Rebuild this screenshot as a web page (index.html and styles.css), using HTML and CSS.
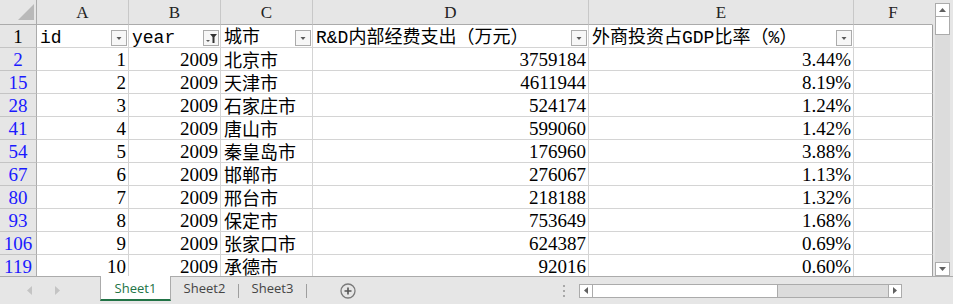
FILE: index.html
```html
<!DOCTYPE html>
<html lang="zh">
<head>
<meta charset="utf-8">
<title>Sheet1</title>
<link rel="stylesheet" href="styles.css">
</head>
<body>
<div class="app">
  <div class="main">
    <div class="grid">
      <div class="corner"><svg width="16" height="16" viewBox="0 0 16 16"><path d="M0 16H16V0z" fill="#b9b9b9"/></svg></div>
      <div class="ch">A</div>
      <div class="ch">B</div>
      <div class="ch">C</div>
      <div class="ch">D</div>
      <div class="ch">E</div>
      <div class="ch last">F</div>

      <div class="rh first">1</div>
      <div class="fc"><span class="ft">id</span><svg class="fb" width="16" height="16" viewBox="0 0 16 16"><rect x="0.5" y="0.5" width="15" height="15" fill="#f7f7f7" stroke="#ababab"/><path d="M5.5 7h5l-2.5 3z" fill="#595959"/></svg></div>
      <div class="fc"><span class="ft">year</span><svg class="fb" width="16" height="16" viewBox="0 0 16 16"><rect x="0.5" y="0.5" width="15" height="15" fill="#f7f7f7" stroke="#ababab"/><path d="M3 10h4l-2 2z" fill="#595959"/><path d="M7 4h7l-2.5 3v6h-2V7z" fill="#333"/></svg></div>
      <div class="fc"><span class="ft">城市</span><svg class="fb" width="16" height="16" viewBox="0 0 16 16"><rect x="0.5" y="0.5" width="15" height="15" fill="#f7f7f7" stroke="#ababab"/><path d="M5.5 7h5l-2.5 3z" fill="#595959"/></svg></div>
      <div class="fc"><span class="ft">R&amp;D内部经费支出（万元）</span><svg class="fb" width="16" height="16" viewBox="0 0 16 16"><rect x="0.5" y="0.5" width="15" height="15" fill="#f7f7f7" stroke="#ababab"/><path d="M5.5 7h5l-2.5 3z" fill="#595959"/></svg></div>
      <div class="fc"><span class="ft">外商投资占GDP比率（%）</span><svg class="fb" width="16" height="16" viewBox="0 0 16 16"><rect x="0.5" y="0.5" width="15" height="15" fill="#f7f7f7" stroke="#ababab"/><path d="M5.5 7h5l-2.5 3z" fill="#595959"/></svg></div>
      <div class="c e"></div>

      <div class="rh">2</div><div class="c n">1</div><div class="c n">2009</div><div class="c t">北京市</div><div class="c n">3759184</div><div class="c n">3.44%</div><div class="c e"></div>
      <div class="rh">15</div><div class="c n">2</div><div class="c n">2009</div><div class="c t">天津市</div><div class="c n">4611944</div><div class="c n">8.19%</div><div class="c e"></div>
      <div class="rh">28</div><div class="c n">3</div><div class="c n">2009</div><div class="c t">石家庄市</div><div class="c n">524174</div><div class="c n">1.24%</div><div class="c e"></div>
      <div class="rh">41</div><div class="c n">4</div><div class="c n">2009</div><div class="c t">唐山市</div><div class="c n">599060</div><div class="c n">1.42%</div><div class="c e"></div>
      <div class="rh">54</div><div class="c n">5</div><div class="c n">2009</div><div class="c t">秦皇岛市</div><div class="c n">176960</div><div class="c n">3.88%</div><div class="c e"></div>
      <div class="rh">67</div><div class="c n">6</div><div class="c n">2009</div><div class="c t">邯郸市</div><div class="c n">276067</div><div class="c n">1.13%</div><div class="c e"></div>
      <div class="rh">80</div><div class="c n">7</div><div class="c n">2009</div><div class="c t">邢台市</div><div class="c n">218188</div><div class="c n">1.32%</div><div class="c e"></div>
      <div class="rh">93</div><div class="c n">8</div><div class="c n">2009</div><div class="c t">保定市</div><div class="c n">753649</div><div class="c n">1.68%</div><div class="c e"></div>
      <div class="rh">106</div><div class="c n">9</div><div class="c n">2009</div><div class="c t">张家口市</div><div class="c n">624387</div><div class="c n">0.69%</div><div class="c e"></div>
      <div class="rh">119</div><div class="c n">10</div><div class="c n">2009</div><div class="c t">承德市</div><div class="c n">92016</div><div class="c n">0.60%</div><div class="c e"></div>
    </div>
    <div class="vscroll">
      <div class="sbtn"><svg width="7" height="4" viewBox="0 0 7 4"><path d="M0 4h7L3.5 0z" fill="#606060"/></svg></div>
      <div class="vthumb"></div>
      <div class="vtrack"></div>
      <div class="sbtn"><svg width="7" height="4" viewBox="0 0 7 4"><path d="M0 0h7L3.5 4z" fill="#606060"/></svg></div>
    </div>
  </div>
  <div class="tabbar">
    <div class="nav">
      <svg width="6" height="9" viewBox="0 0 6 9"><path d="M6 0v9L1 4.5z" fill="#c4c4c4"/></svg>
      <svg width="6" height="9" viewBox="0 0 6 9"><path d="M0 0v9l5-4.5z" fill="#c4c4c4"/></svg>
    </div>
    <div class="tab active">Sheet1</div>
    <div class="tab">Sheet2</div>
    <div class="sep"></div>
    <div class="tab">Sheet3</div>
    <div class="sep"></div>
    <svg class="plus" width="16" height="16" viewBox="0 0 16 16"><circle cx="8" cy="8" r="7" fill="none" stroke="#7a7a7a" stroke-width="1.3"/><path d="M4.5 8h7M8 4.5v7" stroke="#555" stroke-width="1.6"/></svg>
    <svg class="dots" width="3" height="14" viewBox="0 0 3 14"><rect x="1" y="1" width="2" height="2" fill="#a8a8a8"/><rect x="1" y="6" width="2" height="2" fill="#a8a8a8"/><rect x="1" y="11" width="2" height="2" fill="#a8a8a8"/></svg>
    <div class="hscroll">
      <div class="hbtn"><svg width="4" height="7" viewBox="0 0 4 7"><path d="M4 0v7L0 3.5z" fill="#606060"/></svg></div>
      <div class="hthumb"></div>
      <div class="htrack"></div>
      <div class="hbtn"><svg width="4" height="7" viewBox="0 0 4 7"><path d="M0 0v7l4-3.5z" fill="#606060"/></svg></div>
    </div>
  </div>
</div>
</body>
</html>
```

FILE: styles.css
```css
html, body {
  margin: 0;
  padding: 0;
}
body {
  width: 953px;
  height: 304px;
  overflow: hidden;
  background: #e6e6e6;
}
.app {
  width: 953px;
  height: 304px;
  display: flex;
  flex-direction: column;
}
.main {
  display: flex;
  height: 276px;
}
.grid {
  display: grid;
  grid-template-columns: 37px 92px 92px 92px 276px 265px 79px;
  grid-template-rows: 25px repeat(11, 23px);
  align-content: start;
  width: 933px;
  height: 276px;
  overflow: hidden;
  background: #fff;
}
.grid > div {
  box-sizing: border-box;
  overflow: hidden;
  white-space: nowrap;
}
.corner {
  background: #e6e6e6;
  border-right: 1px solid #ababab;
  border-bottom: 1px solid #ababab;
  display: flex;
  justify-content: flex-end;
  align-items: flex-end;
  padding: 0 2px 4px 0;
}
.ch {
  background: #e6e6e6;
  border-right: 1px solid #c8c8c8;
  border-bottom: 1px solid #ababab;
  text-align: center;
  font: 17px/21px "Liberation Serif", serif;
  padding-top: 2px;
  color: #222;
}
.ch.last {
  border-right-color: #e6e6e6;
}
.rh {
  background: #e6e6e6;
  border-right: 1px solid #ababab;
  border-bottom: 1px solid #c4c4c4;
  text-align: center;
  font: 19px/21px "Liberation Serif", serif;
  color: #1a1aff;
  padding-top: 1px;
}
.rh.first {
  color: #000;
}
.fc {
  display: flex;
  justify-content: space-between;
  align-items: flex-end;
  padding: 0 1px 0 3px;
  border-right: 1px solid #d4d4d4;
  border-bottom: 1px solid #d4d4d4;
  font: 18px "Liberation Mono", "Noto Sans CJK SC", monospace;
  color: #000;
}
.ft {
  line-height: 18px;
}
.fb {
  flex: none;
  margin-bottom: 1px;
}
.c {
  border-right: 1px solid #d4d4d4;
  border-bottom: 1px solid #d4d4d4;
  color: #000;
}
.n {
  text-align: right;
  padding: 1px 2px 0 0;
  font: 19px/21px "Liberation Serif", serif;
}
.grid > .t {
  padding: 1px 0 0 3px;
  font: 18px/21px "Noto Sans CJK SC", sans-serif;
  overflow: visible;
}
.e {
  border-right-color: #9e9e9e;
}
.vscroll {
  width: 20px;
  box-sizing: border-box;
  padding: 3px 3px 0 2px;
  display: flex;
  flex-direction: column;
  background: #e6e6e6;
}
.sbtn {
  height: 14px;
  box-sizing: border-box;
  border: 1px solid #ababab;
  background: #fff;
  display: flex;
  align-items: center;
  justify-content: center;
  flex: none;
}
.vthumb {
  height: 18px;
  box-sizing: border-box;
  border: 1px solid #ababab;
  border-top: none;
  background: #fff;
  flex: none;
}
.vtrack {
  flex: 1;
  background: #dcdcdc;
}
.tabbar {
  height: 28px;
  box-sizing: border-box;
  border-top: 1px solid #ababab;
  display: flex;
  align-items: center;
  background: #e6e6e6;
  font: 13px "Open Sans", "Noto Sans", sans-serif;
}
.nav {
  width: 100px;
  box-sizing: border-box;
  padding-left: 26px;
  display: flex;
  gap: 23px;
  align-items: center;
}
.tab {
  align-self: flex-start;
  margin-top: -1px;
  height: 25px;
  width: 67px;
  box-sizing: border-box;
  border-bottom: 2px solid transparent;
  display: flex;
  align-items: center;
  justify-content: center;
  color: #444;
}
.tab.active {
  width: 71px;
  background: #fff;
  border-left: 1px solid #ababab;
  border-right: 1px solid #ababab;
  border-bottom: 2px solid #217346;
  color: #217346;
}
.sep {
  width: 1px;
  height: 14px;
  background: #9e9e9e;
}
.plus {
  margin-left: 33px;
  flex: none;
}
.dots {
  margin-left: 206px;
  flex: none;
}
.hscroll {
  margin-left: 14px;
  width: 323px;
  height: 14px;
  display: flex;
  flex: none;
}
.hbtn {
  width: 14px;
  box-sizing: border-box;
  border: 1px solid #ababab;
  background: #fff;
  display: flex;
  align-items: center;
  justify-content: center;
  flex: none;
}
.hthumb {
  width: 185px;
  box-sizing: border-box;
  border: 1px solid #ababab;
  border-left: none;
  background: #fff;
  flex: none;
}
.htrack {
  flex: 1;
  background: #dcdcdc;
  border-top: 1px solid #ababab;
  border-bottom: 1px solid #ababab;
}
```
